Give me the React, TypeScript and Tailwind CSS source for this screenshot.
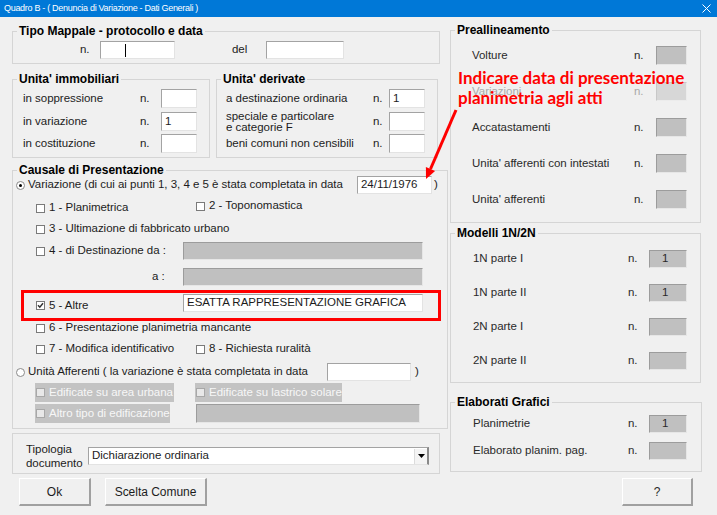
import type { ReactNode } from 'react'

const body = 'text-[11.5px] tracking-[-0.03px]'

function Group({ title, className = '', children }: { title?: string; className?: string; children: ReactNode }) {
  return (
    <fieldset className={`border border-[#d5d5d5] ${className}`}>
      {title && (
        <legend className="ml-[4px] px-[2px] text-[12px] font-bold leading-[14px] tracking-normal text-black">{title}</legend>
      )}
      {children}
    </fieldset>
  )
}

function Field({ className = '', value = '', caret = false }: { className?: string; value?: string; caret?: boolean }) {
  return (
    <div className={`flex shrink-0 items-center border border-[#a3a3a3] border-b-[#e3e3e3] border-r-[#e3e3e3] bg-white pl-[3px] ${className}`}>
      {value}
      {caret && <span className="ml-[21px] h-[13px] w-px bg-black" />}
    </div>
  )
}

function GrayField({ className = '', value = '' }: { className?: string; value?: string }) {
  return (
    <div className={`flex shrink-0 items-center border border-[#9c9c9c] border-b-[#e6e6e6] border-r-[#e6e6e6] bg-[#c0c0c0] pl-[12px] ${className}`}>
      {value}
    </div>
  )
}

function Check({ checked = false, disabled = false }: { checked?: boolean; disabled?: boolean }) {
  return (
    <span
      className={`flex h-[9px] w-[9px] shrink-0 items-center justify-center border ${
        disabled ? 'border-[#a8a8a8] bg-[#e8e8e8]' : 'border-[#7a7a7a] bg-white'
      }`}
    >
      {checked && (
        <svg width="7" height="7" viewBox="0 0 7 7">
          <path d="M1 3.2 L2.8 5.2 L6 1.2" fill="none" stroke="#333" strokeWidth="1.5" />
        </svg>
      )}
    </span>
  )
}

function Radio({ on = false }: { on?: boolean }) {
  return (
    <span className="flex h-[9px] w-[9px] shrink-0 items-center justify-center rounded-full border border-[#8a8a8a] bg-white">
      {on && <span className="h-[3px] w-[3px] rounded-full bg-black" />}
    </span>
  )
}

function CheckItem({ label, checked, className = '' }: { label: string; checked?: boolean; className?: string }) {
  return (
    <div className={`flex shrink-0 items-center ${className}`}>
      <Check checked={checked} />
      <span className="ml-[4px] whitespace-nowrap">{label}</span>
    </div>
  )
}

function Button({ children, className = '' }: { children: ReactNode; className?: string }) {
  return (
    <div
      className={`flex h-[28px] items-center justify-center border border-white border-b-2 border-r-2 border-b-[#a0a0a0] border-r-[#a0a0a0] bg-[#f0f0f0] text-[12px] ${className}`}
    >
      {children}
    </div>
  )
}

const preRows: [string, boolean][] = [
  ['Volture', false],
  ['Variazioni', true],
  ['Accatastamenti', false],
  ["Unita' afferenti con intestati", false],
  ["Unita' afferenti", false],
]

const modelli: [string, string][] = [
  ['1N parte I', '1'],
  ['1N parte II', '1'],
  ['2N parte I', ''],
  ['2N parte II', ''],
]

export default function App() {
  return (
    <div className={`relative h-[515px] w-[717px] overflow-hidden bg-[#f0f0f0] font-['Liberation_Sans',Arial,sans-serif] text-[#1c1c1c] ${body}`}>
      {/* title bar */}
      <div className="flex h-[17px] items-center justify-between bg-[#0078d7] pl-[4px] pr-[6px] text-[9px] tracking-[-0.3px] text-white">
        <span>Quadro B - ( Denuncia di Variazione - Dati Generali )</span>
        <svg width="9" height="9" viewBox="0 0 9 9">
          <path d="M0.5 0.5 L8.5 8.5 M8.5 0.5 L0.5 8.5" stroke="#fff" strokeWidth="1" />
        </svg>
      </div>

      <div className="flex">
        {/* left column */}
        <div className="ml-[12px] flex w-[436px] flex-col">
          <Group title="Tipo Mappale - protocollo e data" className="mt-[7px] w-[428px]">
            <div className="mb-[4px] mt-[3px] flex h-[18px] items-center pl-[67px]">
              <span className="w-[20px]">n.</span>
              <Field className="h-[18px] w-[75px]" caret />
              <span className="ml-[57px] w-[34px]">del</span>
              <Field className="h-[18px] w-[78px]" />
            </div>
          </Group>

          <div className="mt-[8px] flex">
            <Group title="Unita' immobiliari" className="w-[198px]">
              <div className="flex flex-col pb-[4px] pl-[10px] pt-[3px]">
                {[
                  ['in soppressione', ''],
                  ['in variazione', '1'],
                  ['in costituzione', ''],
                ].map(([l, v], i) => (
                  <div key={l} className={`flex h-[19px] items-center ${i === 1 ? 'mt-[4px]' : i === 2 ? 'mt-[3px]' : ''}`}>
                    <span className="w-[117px]">{l}</span>
                    <span className="w-[21px]">n.</span>
                    <Field className="h-[19px] w-[36px]" value={v} />
                  </div>
                ))}
              </div>
            </Group>
            <Group title="Unita' derivate" className="ml-[6px] w-[222px]">
              <div className="flex flex-col pb-[4px] pl-[9px] pt-[3px]">
                <div className="flex h-[19px] items-center">
                  <span className="w-[147px] whitespace-nowrap">a destinazione ordinaria</span>
                  <span className="w-[16px]">n.</span>
                  <Field className="h-[19px] w-[36px]" value="1" />
                </div>
                <div className="mt-[4px] flex h-[19px] items-center">
                  <span className="w-[147px] leading-[11px]">
                    speciale e particolare
                    <br />e categorie F
                  </span>
                  <span className="w-[16px]">n.</span>
                  <Field className="h-[19px] w-[36px]" />
                </div>
                <div className="mt-[3px] flex h-[19px] items-center">
                  <span className="w-[147px] whitespace-nowrap">beni comuni non censibili</span>
                  <span className="w-[16px]">n.</span>
                  <Field className="h-[19px] w-[36px]" />
                </div>
              </div>
            </Group>
          </div>

          <Group title="Causale di Presentazione" className="mt-[5px] w-[436px]">
            <div className="flex flex-col pb-[5px]">
              <div className="-mt-[1px] flex h-[18px] items-center pl-[3px]">
                <Radio on />
                <span className="ml-[3px] w-[329px] whitespace-nowrap">Variazione (di cui ai punti 1, 3, 4 e 5 è stata completata in data</span>
                <Field className="h-[18px] w-[75px]" value="24/11/1976" />
                <span className="ml-[2px]">)</span>
              </div>
              <div className="mt-[4px] flex h-[18px] items-center pl-[23px]">
                <CheckItem label="1 - Planimetrica" className="mt-[2px] w-[160px]" />
                <CheckItem label="2 - Toponomastica" className="-mt-[2px]" />
              </div>
              <div className="mt-[4px] flex h-[18px] items-center pl-[23px]">
                <CheckItem label="3 - Ultimazione di fabbricato urbano" />
              </div>
              <div className="mt-[4px] flex h-[18px] items-center pl-[23px]">
                <CheckItem label="4 - di Destinazione da :" className="w-[147px]" />
                <GrayField className="h-[18px] w-[240px]" />
              </div>
              <div className="mt-[8px] flex h-[18px] items-center pl-[139px]">
                <span className="w-[31px]">a :</span>
                <GrayField className="h-[18px] w-[240px]" />
              </div>
              <div className="ml-[8px] mt-[4px] flex h-[31px] w-[420px] items-center border-[3px] border-[#ff0000] pl-[12px]">
                <CheckItem label="5 - Altre" checked className="w-[147px]" />
                <Field className="-mt-[5px] h-[18px] w-[240px]" value="ESATTA RAPPRESENTAZIONE GRAFICA" />
              </div>
              <div className="flex h-[14px] items-center pl-[23px]">
                <CheckItem label="6 - Presentazione planimetria mancante" />
              </div>
              <div className="mt-[5px] flex h-[18px] items-center pl-[23px]">
                <CheckItem label="7 - Modifica identificativo" className="w-[160px]" />
                <CheckItem label="8 - Richiesta ruralità" />
              </div>
              <div className="mt-[5px] flex h-[18px] items-center pl-[3px]">
                <Radio />
                <span className="ml-[3px] w-[299px] whitespace-nowrap">Unità Afferenti ( la variazione è stata completata in data</span>
                <Field className="h-[18px] w-[84px]" />
                <span className="ml-[4px]">)</span>
              </div>
              <div className="mt-[2px] flex h-[19px] items-stretch pl-[22px] text-[#f7f7f7]">
                <div className="flex w-[139px] items-center overflow-hidden bg-[#c3c3c3] pl-[1px]">
                  <Check disabled />
                  <span className="ml-[4px] whitespace-nowrap">Edificate su area urbana</span>
                </div>
                <div className="ml-[21px] flex w-[147px] items-center overflow-hidden bg-[#c3c3c3] pl-[1px]">
                  <Check disabled />
                  <span className="ml-[4px] whitespace-nowrap">Edificate su lastrico solare</span>
                </div>
              </div>
              <div className="mt-[2px] flex h-[19px] items-stretch pl-[22px] text-[#f7f7f7]">
                <div className="flex w-[135px] items-center overflow-hidden bg-[#c3c3c3] pl-[1px]">
                  <Check disabled />
                  <span className="ml-[4px] whitespace-nowrap">Altro tipo di edificazione</span>
                </div>
                <GrayField className="ml-[26px] h-[19px] w-[224px]" />
              </div>
            </div>
          </Group>

          <Group className="mt-[4px] w-[428px]">
            <div className="flex h-[39px] items-center pl-[13px] pt-[5px]">
              <span className="w-[62px] leading-[14px]">
                Tipologia
                <br />
                documento
              </span>
              <div className="flex h-[18px] w-[341px] items-center border border-[#a3a3a3] border-b-[#e3e3e3] border-r-2 border-r-[#8a8a8a] bg-white pl-[3px]">
                Dichiarazione ordinaria
                <div className="ml-auto flex h-[15px] w-[13px] items-center justify-center border-l border-[#dcdcdc] bg-[#f4f4f4]">
                  <svg width="7" height="4" viewBox="0 0 7 4">
                    <path d="M0 0 H7 L3.5 4 Z" fill="#000" />
                  </svg>
                </div>
              </div>
            </div>
          </Group>

          <div className="mt-[4px] flex">
            <Button className="ml-[7px] w-[72px]">Ok</Button>
            <Button className="ml-[14px] w-[102px]">Scelta Comune</Button>
          </div>
        </div>

        {/* right column */}
        <div className="ml-[2px] flex w-[252px] flex-col text-[#2a2a2a]">
          <Group title="Preallineamento" className="mt-[6px] w-[251px]">
            <div className="flex flex-col gap-[17px] pb-[13px] pl-[21px] pt-[9px]">
              {preRows.map(([l, dis]) => (
                <div key={l} className="flex h-[19px] items-center">
                  <span className={`w-[162px] whitespace-nowrap ${dis ? 'text-[#a9a9a9]' : ''}`}>{l}</span>
                  <span className={`w-[22px] ${dis ? 'text-[#a9a9a9]' : ''}`}>n.</span>
                  <div
                    className={`h-[19px] w-[31px] border ${
                      dis
                        ? 'border-[#c8c8c8] border-b-[#ececec] border-r-[#ececec] bg-[#d7d7d7]'
                        : 'border-[#9c9c9c] border-b-[#e6e6e6] border-r-[#e6e6e6] bg-[#c0c0c0]'
                    }`}
                  />
                </div>
              ))}
            </div>
          </Group>

          <Group title="Modelli 1N/2N" className="mt-[3px] w-[251px]">
            <div className="flex flex-col gap-[16px] pb-[12px] pl-[22px] pt-[10px]">
              {modelli.map(([l, v]) => (
                <div key={l} className="flex h-[18px] items-center">
                  <span className="w-[155px]">{l}</span>
                  <span className="w-[21px]">n.</span>
                  <GrayField className="h-[18px] w-[38px]" value={v} />
                </div>
              ))}
            </div>
          </Group>

          <Group title="Elaborati Grafici" className="mt-[12px] w-[252px]">
            <div className="flex flex-col gap-[9px] pb-[11px] pl-[22px] pt-[6px]">
              <div className="flex h-[18px] items-center">
                <span className="w-[155px]">Planimetrie</span>
                <span className="w-[21px]">n.</span>
                <GrayField className="h-[18px] w-[38px]" value="1" />
              </div>
              <div className="flex h-[18px] items-center">
                <span className="w-[155px]">Elaborato planim. pag.</span>
                <span className="w-[21px]">n.</span>
                <GrayField className="h-[18px] w-[38px]" />
              </div>
            </div>
          </Group>

          <Button className="ml-[172px] mt-[6px] w-[71px]">?</Button>
        </div>
      </div>

      {/* red annotation overlay */}
      <div className="absolute left-[458px] top-[68px] font-['Lato',sans-serif] text-[17px] font-bold leading-[20px] tracking-normal text-[#ff0000]">
        Indicare data di presentazione
        <br />
        planimetria agli atti
      </div>
      <svg className="pointer-events-none absolute left-0 top-0" width="717" height="515">
        <line x1="456" y1="110" x2="430.5" y2="169" stroke="#ff0000" strokeWidth="3" />
        <polygon points="426,179 435.1,171 425.9,167" fill="#ff0000" />
      </svg>
    </div>
  )
}
